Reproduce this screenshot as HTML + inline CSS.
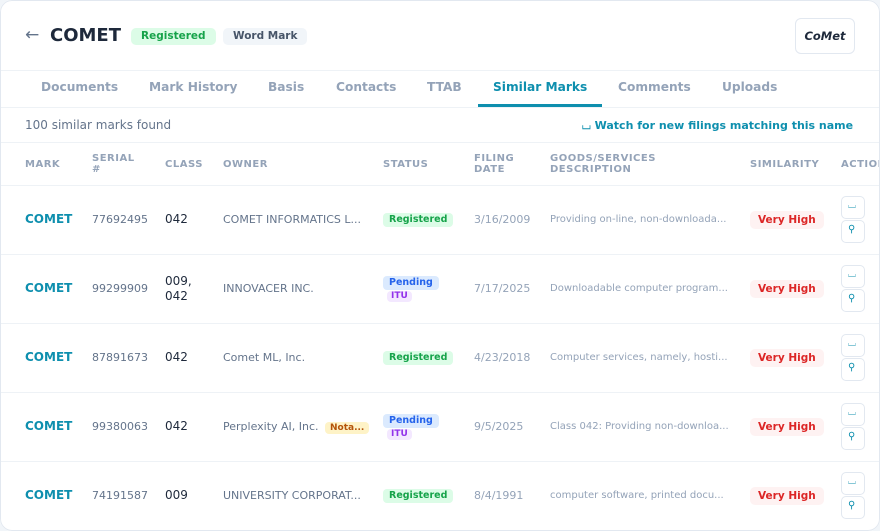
<!DOCTYPE html>
<html><head><meta charset="utf-8"><style>
*{margin:0;padding:0;box-sizing:border-box}
body{width:880px;height:531px;background:#f1f5f9;font-family:"DejaVu Sans","Liberation Sans",sans-serif;overflow:hidden;position:relative}
.card{position:absolute;left:0;top:0;width:880px;height:531px;background:#fff;border-radius:12px;overflow:hidden}
.card>*{margin-top:1px}
.card>.bd{margin-top:0}
.bd{position:absolute;left:0;top:0;width:880px;height:531px;border:1px solid #e2e8f0;border-radius:12px;pointer-events:none}
.a{position:absolute;white-space:nowrap}
.hl{position:absolute;left:0;width:880px;height:1px;background:#eef2f6}
.tab{position:absolute;top:79px;font-size:12.2px;font-weight:bold;color:#94a3b8}
.th{position:absolute;font-size:10px;font-weight:bold;color:#94a3b8;letter-spacing:.5px;line-height:11px}
.pill{position:absolute;font-size:9.5px;font-weight:bold;border-radius:4px;padding:1px 6px;line-height:12px}
.reg{background:#dcfce7;color:#16a34a}
.pen{background:#dbeafe;color:#2563eb}
.itu{background:#f3e8ff;color:#9333ea;font-size:9px;padding:0 4px;line-height:11px}
.vh{background:#fef2f2;color:#dc2626;font-size:10.5px;padding:2px 8px;line-height:14px;border-radius:5px}
.btn{position:absolute;left:841px;width:24px;height:23px;border:1px solid #e2e8f0;border-radius:5px;background:#fff}
</style></head><body><div class="card">
<div class="a" style="left:25px;top:24px;font-size:17px;color:#64748b">←</div>
<div class="a" style="left:50px;top:24px;font-size:18px;font-weight:bold;color:#1e293b">COMET</div>
<div class="pill reg a" style="left:131px;top:27px;font-size:10.5px;padding:2px 10px;line-height:13px;border-radius:5px">Registered</div>
<div class="pill a" style="left:223px;top:27px;font-size:10.5px;padding:2px 10px;line-height:13px;border-radius:5px;background:#f1f5f9;color:#475569">Word Mark</div>
<div class="a" style="left:795px;top:17px;width:60px;height:36px;border:1px solid #e2e8f0;border-radius:6px;font-size:11.5px;font-weight:bold;font-style:italic;color:#1e293b;text-align:center;line-height:34px">CoMet</div>
<div class="hl" style="top:69px"></div>
<div class="tab" style="left:41px">Documents</div>
<div class="tab" style="left:149px">Mark History</div>
<div class="tab" style="left:268px">Basis</div>
<div class="tab" style="left:336px">Contacts</div>
<div class="tab" style="left:427px">TTAB</div>
<div class="tab" style="left:493px;color:#0e8fae">Similar Marks</div>
<div class="tab" style="left:618px">Comments</div>
<div class="tab" style="left:722px">Uploads</div>
<div class="hl" style="top:106px"></div>
<div class="a" style="left:478px;top:103px;width:124px;height:3px;background:#0e8fae"></div>
<div class="a" style="left:25px;top:117px;font-size:12px;color:#64748b">100 similar marks found</div>
<div class="a" style="left:582px;top:118px;font-size:11px;font-weight:bold;color:#0e8fae">⌴ Watch for new filings matching this name</div>
<div class="hl" style="top:141px"></div>
<div class="th" style="left:25px;top:158px">MARK</div>
<div class="th" style="left:92px;top:152px">SERIAL<br>#</div>
<div class="th" style="left:165px;top:158px">CLASS</div>
<div class="th" style="left:223px;top:158px">OWNER</div>
<div class="th" style="left:383px;top:158px">STATUS</div>
<div class="th" style="left:474px;top:152px">FILING<br>DATE</div>
<div class="th" style="left:550px;top:152px">GOODS/SERVICES<br>DESCRIPTION</div>
<div class="th" style="left:750px;top:158px">SIMILARITY</div>
<div class="th" style="left:841px;top:158px">ACTIONS</div>
<div class="hl" style="top:184px"></div>

<div class="a" style="left:25px;top:211px;font-size:12px;font-weight:bold;color:#0e8fae">COMET</div>
<div class="a" style="left:92px;top:212px;font-size:11px;color:#64748b">77692495</div>
<div class="a" style="left:165px;top:211px;font-size:12px;color:#1e293b">042</div>
<div class="a" style="left:223px;top:212px;font-size:11px;color:#64748b">COMET INFORMATICS L...</div>
<div class="pill reg" style="left:383px;top:212px">Registered</div>
<div class="a" style="left:474px;top:212px;font-size:11px;color:#94a3b8">3/16/2009</div>
<div class="a" style="left:550px;top:213px;font-size:10px;color:#94a3b8">Providing on-line, non-downloada...</div>
<div class="pill vh" style="left:750px;top:210px">Very High</div>
<div class="btn" style="top:195px"></div><div class="a" style="left:848px;top:199px;font-size:10px;color:#0e8fae">⌴</div>
<div class="btn" style="top:219px"></div><div class="a" style="left:848px;top:223px;font-size:10px;color:#0e8fae">⚲</div>
<div class="hl" style="top:253px"></div>

<div class="a" style="left:25px;top:280px;font-size:12px;font-weight:bold;color:#0e8fae">COMET</div>
<div class="a" style="left:92px;top:281px;font-size:11px;color:#64748b">99299909</div>
<div class="a" style="left:165px;top:273px;font-size:12px;color:#1e293b;line-height:15px">009,<br>042</div>
<div class="a" style="left:223px;top:281px;font-size:11px;color:#64748b">INNOVACER INC.</div>
<div class="pill pen" style="left:383px;top:275px">Pending</div>
<div class="pill itu" style="left:387px;top:290px">ITU</div>
<div class="a" style="left:474px;top:281px;font-size:11px;color:#94a3b8">7/17/2025</div>
<div class="a" style="left:550px;top:282px;font-size:10px;color:#94a3b8">Downloadable computer program...</div>
<div class="pill vh" style="left:750px;top:279px">Very High</div>
<div class="btn" style="top:264px"></div><div class="a" style="left:848px;top:268px;font-size:10px;color:#0e8fae">⌴</div>
<div class="btn" style="top:288px"></div><div class="a" style="left:848px;top:292px;font-size:10px;color:#0e8fae">⚲</div>
<div class="hl" style="top:322px"></div>

<div class="a" style="left:25px;top:349px;font-size:12px;font-weight:bold;color:#0e8fae">COMET</div>
<div class="a" style="left:92px;top:350px;font-size:11px;color:#64748b">87891673</div>
<div class="a" style="left:165px;top:349px;font-size:12px;color:#1e293b">042</div>
<div class="a" style="left:223px;top:350px;font-size:11px;color:#64748b">Comet ML, Inc.</div>
<div class="pill reg" style="left:383px;top:350px">Registered</div>
<div class="a" style="left:474px;top:350px;font-size:11px;color:#94a3b8">4/23/2018</div>
<div class="a" style="left:550px;top:351px;font-size:10px;color:#94a3b8">Computer services, namely, hosti...</div>
<div class="pill vh" style="left:750px;top:348px">Very High</div>
<div class="btn" style="top:333px"></div><div class="a" style="left:848px;top:337px;font-size:10px;color:#0e8fae">⌴</div>
<div class="btn" style="top:357px"></div><div class="a" style="left:848px;top:361px;font-size:10px;color:#0e8fae">⚲</div>
<div class="hl" style="top:391px"></div>

<div class="a" style="left:25px;top:418px;font-size:12px;font-weight:bold;color:#0e8fae">COMET</div>
<div class="a" style="left:92px;top:419px;font-size:11px;color:#64748b">99380063</div>
<div class="a" style="left:165px;top:418px;font-size:12px;color:#1e293b">042</div>
<div class="a" style="left:223px;top:419px;font-size:11px;color:#64748b">Perplexity AI, Inc.</div>
<div class="pill" style="left:325px;top:421px;background:#fef3c7;color:#b45309;font-size:9px;padding:0 5px;line-height:12px">Nota...</div>
<div class="pill pen" style="left:383px;top:413px">Pending</div>
<div class="pill itu" style="left:387px;top:428px">ITU</div>
<div class="a" style="left:474px;top:419px;font-size:11px;color:#94a3b8">9/5/2025</div>
<div class="a" style="left:550px;top:420px;font-size:10px;color:#94a3b8">Class 042: Providing non-downloa...</div>
<div class="pill vh" style="left:750px;top:417px">Very High</div>
<div class="btn" style="top:402px"></div><div class="a" style="left:848px;top:406px;font-size:10px;color:#0e8fae">⌴</div>
<div class="btn" style="top:426px"></div><div class="a" style="left:848px;top:430px;font-size:10px;color:#0e8fae">⚲</div>
<div class="hl" style="top:460px"></div>

<div class="a" style="left:25px;top:487px;font-size:12px;font-weight:bold;color:#0e8fae">COMET</div>
<div class="a" style="left:92px;top:488px;font-size:11px;color:#64748b">74191587</div>
<div class="a" style="left:165px;top:487px;font-size:12px;color:#1e293b">009</div>
<div class="a" style="left:223px;top:488px;font-size:11px;color:#64748b">UNIVERSITY CORPORAT...</div>
<div class="pill reg" style="left:383px;top:488px">Registered</div>
<div class="a" style="left:474px;top:488px;font-size:11px;color:#94a3b8">8/4/1991</div>
<div class="a" style="left:550px;top:489px;font-size:10px;color:#94a3b8">computer software, printed docu...</div>
<div class="pill vh" style="left:750px;top:486px">Very High</div>
<div class="btn" style="top:471px"></div><div class="a" style="left:848px;top:475px;font-size:10px;color:#0e8fae">⌴</div>
<div class="btn" style="top:495px"></div><div class="a" style="left:848px;top:499px;font-size:10px;color:#0e8fae">⚲</div>
<div class="bd"></div>
</div></body></html>
